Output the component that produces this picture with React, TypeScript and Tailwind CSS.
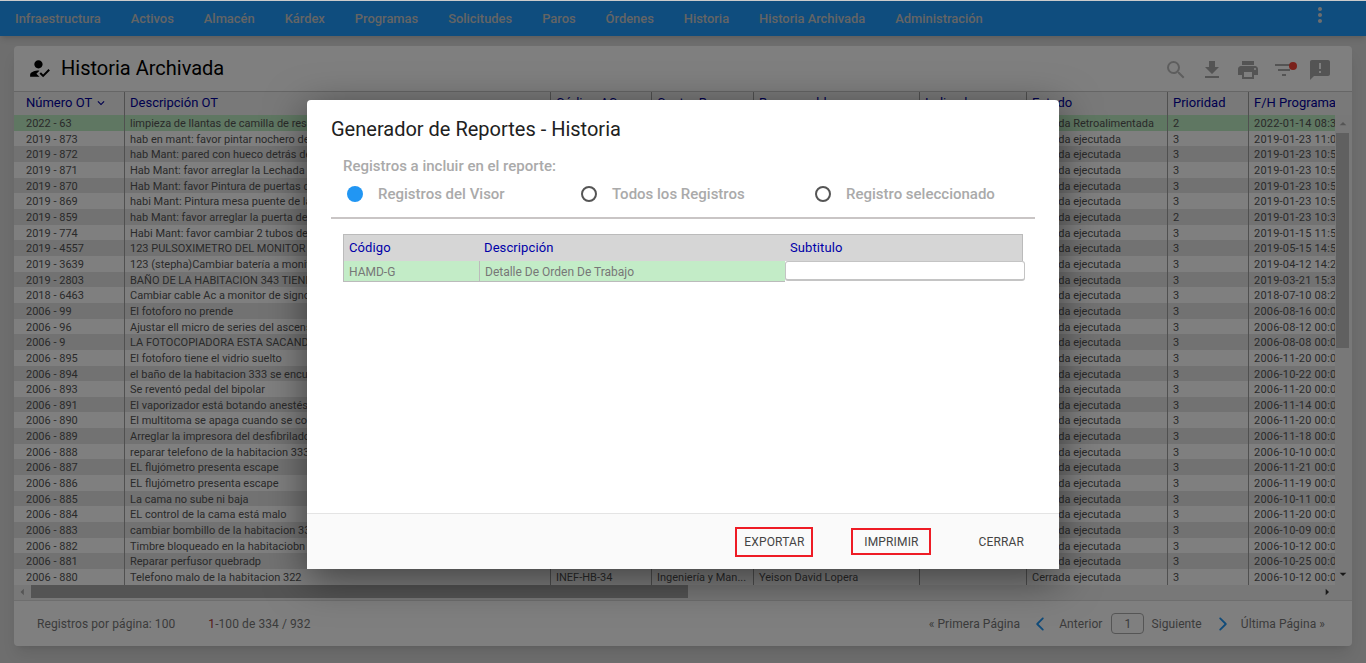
import { MdSearch, MdFileDownload, MdPrint, MdFilterList, MdAnnouncement, MdMoreVert, MdHowToReg, MdKeyboardArrowDown, MdArrowDropUp, MdArrowDropDown, MdArrowLeft, MdArrowRight } from 'react-icons/md'
import { IoIosArrowBack, IoIosArrowForward } from 'react-icons/io'

const menu = ['Infraestructura', 'Activos', 'Almacén', 'Kárdex', 'Programas', 'Solicitudes', 'Paros', 'Órdenes', 'Historia', 'Historia Archivada', 'Administración']

const rows = [
  ['2022 - 63', 'limpieza de llantas de camilla de resonancia', '2', '2022-01-14 08:30'],
  ['2019 - 873', 'hab en mant: favor pintar nochero de la habitacion', '3', '2019-01-23 11:00'],
  ['2019 - 872', 'hab Mant: pared con hueco detrás de la cama', '3', '2019-01-23 10:58'],
  ['2019 - 871', 'Hab Mant: favor arreglar la Lechada del baño', '3', '2019-01-23 10:56'],
  ['2019 - 870', 'Hab Mant: favor Pintura de puertas del baño', '3', '2019-01-23 10:54'],
  ['2019 - 869', 'habi Mant: Pintura mesa puente de la habitacion', '3', '2019-01-23 10:52'],
  ['2019 - 859', 'hab Mant: favor arreglar la puerta del baño', '2', '2019-01-23 10:30'],
  ['2019 - 774', 'Habi Mant: favor cambiar 2 tubos de la lampara', '3', '2019-01-15 11:50'],
  ['2019 - 4557', '123 PULSOXIMETRO DEL MONITOR NO FUNCIONA', '3', '2019-05-15 14:50'],
  ['2019 - 3639', '123 (stepha)Cambiar batería a monitor de signos', '3', '2019-04-12 14:20'],
  ['2019 - 2803', 'BAÑO DE LA HABITACION 343 TIENE UNA FUGA', '3', '2019-03-21 15:30'],
  ['2018 - 6463', 'Cambiar cable Ac a monitor de signos vitales', '3', '2018-07-10 08:20'],
  ['2006 - 99', 'El fotoforo no prende', '3', '2006-08-16 00:00'],
  ['2006 - 96', 'Ajustar ell micro de series del ascensor', '3', '2006-08-12 00:00'],
  ['2006 - 9', 'LA FOTOCOPIADORA ESTA SACANDO MANCHAS', '3', '2006-08-08 00:00'],
  ['2006 - 895', 'El fotoforo tiene el vidrio suelto', '3', '2006-11-20 00:00'],
  ['2006 - 894', 'el baño de la habitacion 333 se encuentra dañado', '3', '2006-10-22 00:00'],
  ['2006 - 893', 'Se reventó pedal del bipolar', '3', '2006-11-20 00:00'],
  ['2006 - 891', 'El vaporizador está botando anestésico', '3', '2006-11-14 00:00'],
  ['2006 - 890', 'El multitoma se apaga cuando se conecta', '3', '2006-11-20 00:00'],
  ['2006 - 889', 'Arreglar la impresora del desfibrilador', '3', '2006-11-18 00:00'],
  ['2006 - 888', 'reparar telefono de la habitacion 333', '3', '2006-10-10 00:00'],
  ['2006 - 887', 'EL flujómetro presenta escape', '3', '2006-11-21 00:00'],
  ['2006 - 886', 'EL flujómetro presenta escape', '3', '2006-11-19 00:00'],
  ['2006 - 885', 'La cama no sube ni baja', '3', '2006-10-11 00:00'],
  ['2006 - 884', 'EL control de la cama está malo', '3', '2006-11-20 00:00'],
  ['2006 - 883', 'cambiar bombillo de la habitacion 331', '3', '2006-10-09 00:00'],
  ['2006 - 882', 'Timbre bloqueado en la habitaciobn 320', '3', '2006-10-12 00:00'],
  ['2006 - 881', 'Reparar perfusor quebradp', '3', '2006-10-25 00:00'],
  ['2006 - 880', 'Telefono malo de la habitacion 322', '3', '2006-10-12 00:00'],
]

function Radio({ label, on, className }: { label: string; on?: boolean; className: string }) {
  return (
    <div className={`flex items-center ${className}`}>
      <span className={`h-4 w-4 shrink-0 rounded-full ${on ? 'bg-[#2196f3]' : 'border-2 border-[#555]'}`} />
      <span className="ml-[15px] text-[15px] font-medium text-[#aaa]">{label}</span>
    </div>
  )
}

function HeadCell({ w, children }: { w: string; children: React.ReactNode }) {
  return (
    <div className={`${w} flex h-full shrink-0 items-center overflow-hidden whitespace-nowrap border-r border-[#a0a0a0] pb-[1px] pl-[5px] text-[13px] text-[#00009c] last:border-r-0`}>
      {children}
    </div>
  )
}

function Cell({ w, children, last }: { w: string; children?: React.ReactNode; last?: boolean }) {
  return (
    <div className={`${w} h-full shrink-0 overflow-hidden whitespace-nowrap pl-[5px] leading-[18px] ${last ? 'tracking-[0.2px]' : 'border-r border-[#a0a0a0]'}`}>
      {children}
    </div>
  )
}

export default function App() {
  return (
    <div className="relative h-[663px] w-[1366px] overflow-hidden bg-[#dcdcdc] font-['Roboto',sans-serif]">
      <div className="h-px bg-[#ccc]" />

      {/* Top menu */}
      <nav className="flex h-[35px] items-center gap-[30px] bg-[#1f9bfc] pl-[15px] pr-[34px] shadow-md">
        {menu.map((m) => (
          <span key={m} className="text-[12.9px] font-medium text-[#c9c9c9]">{m}</span>
        ))}
        <MdMoreVert className="-mt-[8px] ml-auto text-[24px] text-[#ddd]" />
      </nav>

      {/* Card */}
      <div className="mx-[14px] mt-[10px] flex h-[600px] flex-col rounded-sm bg-white shadow-lg">
        <div className="flex h-[45px] shrink-0 items-center pl-[13px] pr-[20px]">
          <MdHowToReg className="-mt-[1px] text-[25px] text-black" />
          <h1 className="-mt-[2px] ml-[9px] text-[20px] text-black">Historia Archivada</h1>
          <div className="ml-auto mt-[3px] flex items-center gap-[12px] text-[24px] text-[#a8a8a8]">
            <MdSearch className="text-[#bdbdbd]" />
            <MdFileDownload />
            <MdPrint />
            <div className="relative">
              <MdFilterList />
              <span className="absolute right-[-1px] top-[4px] h-2 w-2 rounded-full bg-[#f44336]" />
            </div>
            <MdAnnouncement />
          </div>
        </div>

        <div className="flex h-[24px] shrink-0 items-center border-t border-[#ccc] bg-[#f2f2f2]">
          <HeadCell w="w-[111px]"><span className="ml-[7px]">Número OT</span><MdKeyboardArrowDown className="ml-[2px] text-[14px]" /></HeadCell>
          <HeadCell w="w-[426px]">Descripción OT</HeadCell>
          <HeadCell w="w-[101px]">Código AC</HeadCell>
          <HeadCell w="w-[102px]">Centro Resp.</HeadCell>
          <HeadCell w="w-[166px]">Responsable</HeadCell>
          <HeadCell w="w-[107px]">Indicadores</HeadCell>
          <HeadCell w="w-[141px]">Estado</HeadCell>
          <HeadCell w="w-[81px]">Prioridad</HeadCell>
          <HeadCell w="w-[103px]"><span className="w-[81px] overflow-hidden">F/H Programada</span></HeadCell>
        </div>

        <div className="flex h-[470px] shrink-0">
          <div className="w-[1321px] shrink-0 overflow-hidden text-[11px] text-[#555]">
            {rows.map((r, i) => (
              <div key={r[0]} className={`flex h-[15.67px] ${i === 0 ? 'bg-[#bfeec4]' : i % 2 === 1 ? 'bg-white' : 'bg-[#e4e4e4]'}`}>
                <Cell w="w-[111px]"><span className="pl-[7px]">{r[0]}</span></Cell>
                <Cell w="w-[426px]">{r[1]}</Cell>
                <Cell w="w-[101px]">{i === 29 ? 'INEF-HB-34' : ''}</Cell>
                <Cell w="w-[102px]">{i === 29 ? 'Ingeniería y Man...' : ''}</Cell>
                <Cell w="w-[166px]">{i === 29 ? 'Yeison David Lopera' : ''}</Cell>
                <Cell w="w-[107px]" />
                <Cell w="w-[141px]">{i === 0 ? 'Cerrada Retroalimentada' : 'Cerrada ejecutada'}</Cell>
                <Cell w="w-[81px]">{r[2]}</Cell>
                <Cell w="w-[86px]" last>{r[3]}</Cell>
              </div>
            ))}
          </div>
          <div className="flex w-[17px] shrink-0 flex-col items-center bg-[#f1f1f1] pb-[2px] pr-[2px]">
            <MdArrowDropUp className="h-[18px] shrink-0 text-[16px] text-[#aaa]" />
            <div className="h-[215px] w-[13px] shrink-0 bg-[#c1c1c1]" />
            <MdArrowDropDown className="mt-auto h-[18px] shrink-0 text-[16px] text-[#333]" />
          </div>
        </div>

        <div className="flex h-[15px] shrink-0 items-center bg-[#f1f1f1] pb-[2px] pr-[17px]">
          <MdArrowLeft className="w-[17px] shrink-0 text-[16px] text-[#aaa]" />
          <div className="h-[13px] w-[657px] bg-[#a8a8a8]" />
          <MdArrowRight className="ml-auto text-[16px] text-[#333]" />
        </div>

        <div className="flex flex-1 items-center border-t border-[#ddd] pl-[23px] pr-[27px] text-[12px] tracking-[0.08px] text-[#777]">
          <span>Registros por página: 100</span>
          <span className="ml-[33px]"><span className="text-[#a33]">1</span>-100 de 334 / 932</span>
          <span className="ml-auto">« Primera Página</span>
          <IoIosArrowBack className="ml-[10px] text-[20px] text-[#2196f3]" />
          <span className="ml-[9px]">Anterior</span>
          <span className="ml-[9px] flex h-[21px] w-[33px] items-center justify-center rounded-sm border border-[#aaa]">1</span>
          <span className="ml-[7px]">Siguiente</span>
          <IoIosArrowForward className="ml-[11px] text-[20px] text-[#2196f3]" />
          <span className="ml-[8px]">Última Página »</span>
        </div>
      </div>

      {/* Backdrop + dialog */}
      <div className="absolute inset-x-0 bottom-0 top-px flex justify-center bg-black/50 pt-[99px]">
        <div className="flex h-[469px] w-[752px] flex-col rounded-sm bg-white shadow-[0_10px_40px_rgba(0,0,0,0.5)]">
          <div className="flex-1 px-[24px] pt-[18px]">
            <h2 className="text-[20px] leading-[23px] text-[#212121]">Generador de Reportes - Historia</h2>
            <p className="ml-[12px] mt-[17px] text-[15px] font-medium leading-[16px] text-[#aaa]">Registros a incluir en el reporte:</p>
            <div className="mt-[12px] flex h-[16px] items-center pl-[16px]">
              <Radio label="Registros del Visor" on className="w-[234px]" />
              <Radio label="Todos los Registros" className="w-[234px]" />
              <Radio label="Registro seleccionado" className="w-[200px]" />
            </div>
            <div className="mt-[15px] h-[2px] w-[704px] bg-[#c9c5c5]" />

            <div className="ml-[12px] mt-[15px] w-[682px]">
              <div className="flex h-[27px] w-[680px] items-center border border-b-0 border-[#bbb] bg-[#d6d6d6] pb-[1px] text-[13px] tracking-[0.1px] text-[#0000a8]">
                <span className="w-[136px] pl-[5px]">Código</span>
                <span className="w-[306px] pl-[4px]">Descripción</span>
                <span className="pl-[4px]">Subtitulo</span>
              </div>
              <div className="flex h-[21px] text-[12px] text-[#777]">
                <span className="flex w-[137px] items-center border-b border-l border-r border-[#bbb] bg-[#c3ecc7] pl-[5px] pt-[1px]">HAMD-G</span>
                <span className="flex w-[305px] items-center border-b border-[#bbb] bg-[#c3ecc7] pl-[5px] pt-[1px]">Detalle De Orden De Trabajo</span>
                <span className="h-[20px] w-[240px] rounded-[3px] border border-b-2 border-[#c4c4c4] bg-white" />
              </div>
            </div>
          </div>

          <div className="flex h-[56px] shrink-0 items-center border-t border-[#e4e4e4] bg-[#fafafa] pr-[35px] text-[12px] tracking-[0.15px] text-[#444]">
            <button className="ml-auto h-[30px] w-[78px] border-2 border-[#ee1c25]">EXPORTAR</button>
            <button className="ml-[38px] h-[27px] w-[80px] border-2 border-[#ee1c25]">IMPRIMIR</button>
            <button className="ml-[47px]">CERRAR</button>
          </div>
        </div>
      </div>
    </div>
  )
}
